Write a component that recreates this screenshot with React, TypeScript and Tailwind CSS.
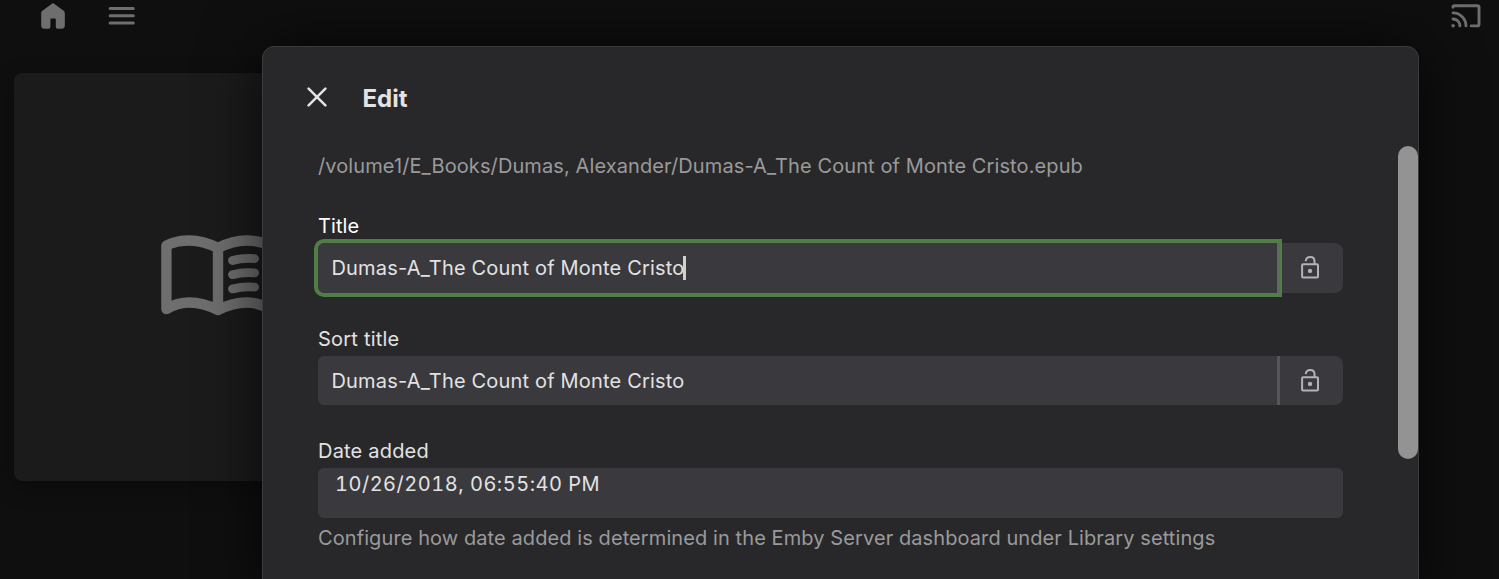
import React from 'react';

interface LockableFieldProps {
  label: string;
  value: string;
  focused?: boolean;
}

function HomeIcon() {
  return (
    <svg className="w-6 h-[26px] shrink-0" viewBox="0 0 24 26" fill="#6e6e6e">
      <path d="M10.5 0.9Q12 -0.3 13.5 0.9L22.6 7.7Q23.8 8.6 23.8 10V22.6Q23.8 25.8 20.6 25.8H16.4Q14.8 25.8 14.8 24V16.7Q14.8 15.6 13.7 15.6H10.5Q9.4 15.6 9.4 16.7V24Q9.4 25.8 7.6 25.8H3.4Q0.2 25.8 0.2 22.6V10Q0.2 8.6 1.4 7.7Z" />
    </svg>
  );
}

function MenuIcon() {
  return (
    <svg className="w-7 h-5 shrink-0" viewBox="0 0 28 20" stroke="#6e6e6e" strokeWidth="3" strokeLinecap="round">
      <path d="M2.1 2.6H25.3M2.1 9.8H25.3M2.1 17H25.3" />
    </svg>
  );
}

function CastIcon() {
  return (
    <svg className="w-[30px] h-6 shrink-0" viewBox="0 0 30 24" fill="none" stroke="#6e6e6e" strokeWidth="2.9" strokeLinecap="round">
      <path d="M2 3.2V3Q2 1.7 3.4 1.7H26.5Q28 1.7 28 3.2V20.2Q28 21.9 26.5 21.9H20.2" />
      <path d="M2 8.9A13 13 0 0 1 15 21.9M2 15A6.9 6.9 0 0 1 8.9 21.9" />
      <circle cx="2.1" cy="21.7" r="1.8" fill="#6e6e6e" stroke="none" />
    </svg>
  );
}

function BookIcon() {
  return (
    <svg className="w-[114px] h-[82px] shrink-0" viewBox="0 0 114 82" fill="none" stroke="#6e6e6e" strokeWidth="10.4" strokeLinecap="round" strokeLinejoin="round">
      <path d="M57 13C47 8 38 5.5 28.5 5.5S12 7 5.4 10.5V74C12 70 19 67.5 28.5 67.5S47 70 57 75C67 70 76 67.5 85.5 67.5S102 70 108.6 74V10.5C102 7 95 5.5 85.5 5.5S67 8 57 13V75" />
      <path strokeWidth="8.8" d="M71.5 25.5Q82 22.6 93.600 23.7M71.5 39.7Q82 36.8 93.600 37.9M71.5 53.9Q82 51 93.600 52.1" />
    </svg>
  );
}

function CloseIcon() {
  return (
    <svg className="w-5 h-5 shrink-0" viewBox="0 0 20 20" stroke="#e3e3e3" strokeWidth="2.5" strokeLinecap="round">
      <path d="M1.6 1.6L18.4 18.4M18.4 1.6L1.6 18.4" />
    </svg>
  );
}

function LockOpenIcon() {
  return (
    <svg className="w-[18px] h-[23px]" viewBox="0 0 18 23" fill="none" stroke="#b3b3b5" strokeWidth="2" strokeLinecap="butt">
      <rect x="1.1" y="8.2" width="15.9" height="13.3" rx="1" />
      <path d="M4.700 5.1C5 2.500 6.800 1 9.200 1C11.700 1 13.500 2.700 13.500 5.200V8.200" />
      <circle cx="9" cy="14.900" r="2.200" fill="#b3b3b5" stroke="none" />
    </svg>
  );
}

function LockableField({ label, value, focused }: LockableFieldProps) {
  return (
    <div className="flex flex-col h-[112.5px]">
      <label className={focused ? 'h-[29px] leading-[25px] tracking-[0.1px] text-white' : 'h-[29px] leading-[25px] tracking-[0.22px] text-[#e2e2e3]'}>
        {label}
      </label>
      <div className="relative flex w-[1025px] h-[49.5px]">
        <div className="flex items-center flex-1 pl-[13.5px] pt-px rounded-l-md bg-[#3a393d] text-[#e2e2e3]">
          <span className="tracking-[0.18px]">{value}</span>
          {focused && <span className="-ml-px w-[3px] h-6 bg-[#d0d0d0]" />}
        </div>
        {/* Focus ring, squared off where it meets the lock button */}
        {focused && (
          <div className="absolute -left-1 -top-1 w-[967.5px] h-[58px] rounded-l-[10px] border-4 border-r-2 border-[#507e44]" />
        )}
        <div className={focused ? 'relative w-[3px] bg-[#5d6c5d]' : 'w-[3px] bg-[#565659]'} />
        <button className="flex items-center justify-center w-[63px] pr-1 rounded-r-lg bg-[#3a393d]">
          <LockOpenIcon />
        </button>
      </div>
    </div>
  );
}

export default function App() {
  return (
    <div className="relative w-full h-[579px] overflow-hidden bg-[#0f0f0f] font-['Inter',sans-serif] text-[20px]">
      {/* Dimmed library page */}
      <header className="flex items-start h-[73px] pt-[3px] pl-[41px] pr-[18px]">
        <HomeIcon />
        <div className="pt-[3px] ml-[43px]">
          <MenuIcon />
        </div>
        <div className="ml-auto pt-px">
          <CastIcon />
        </div>
      </header>
      <div className="flex items-center justify-center ml-[14px] w-[408px] h-[408px] rounded-lg bg-[#1b1b1b] shadow-[0_6px_22px_rgba(0,0,0,0.3)]">
        <div className="mr-[1px] mb-[2px]">
          <BookIcon />
        </div>
      </div>

      {/* Edit dialog */}
      <section className="absolute left-[262px] top-[46px] flex w-[1157px] h-[560px] rounded-xl border border-[#3b3b3c] bg-[#28282a] shadow-[0_0_60px_rgba(0,0,0,0.7)]">
        <div className="flex-1 pl-[55px] pt-[37px]">
          <div className="flex items-start -ml-[11px] h-7 pt-[3px]">
            <CloseIcon />
            <h2 className="-mt-[2px] ml-[35.5px] text-[24px] leading-7 font-bold text-[#e3e3e3]">Edit</h2>
          </div>
          <p className="mt-[42px] mb-[35px] h-[25px] leading-[25px] tracking-[0.1px] text-[#9a9a9b]">
            /volume1/E_Books/Dumas, Alexander/Dumas-A_The Count of Monte Cristo.epub
          </p>
          <LockableField label="Title" value="Dumas-A_The Count of Monte Cristo" focused />
          <LockableField label="Sort title" value="Dumas-A_The Count of Monte Cristo" />
          <label className="block h-[29px] leading-[25px] tracking-[0.2px] text-[#e2e2e3]">Date added</label>
          <div className="w-[1025px] h-[49.5px] pl-[17px] pt-1 rounded-md bg-[#3a393d] leading-[25px] tracking-[0.5px] tabular-nums text-[#e2e2e3]">
            10/26/2018, 06:55:40 PM
          </div>
          <p className="mt-[8px] leading-[25px] tracking-[0.09px] text-[#9a9a9b]">
            Configure how date added is determined in the Emby Server dashboard under Library settings
          </p>
        </div>
        <div className="mt-[99px] w-5 h-[313px] rounded-full bg-[#939393]" />
      </section>
    </div>
  );
}
